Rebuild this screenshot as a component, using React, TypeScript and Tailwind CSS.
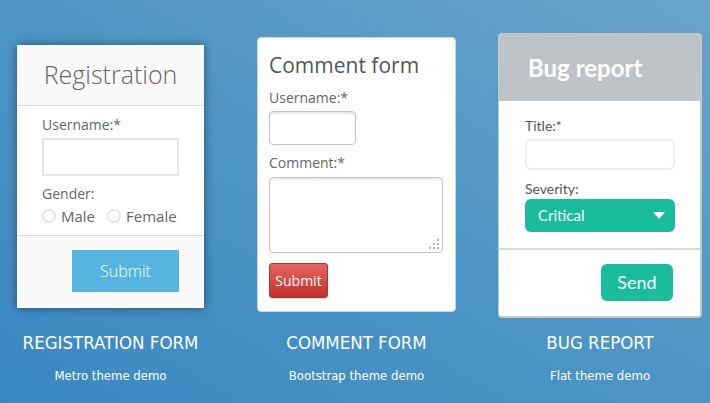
import React from "react";

const openSans = { fontFamily: '"Open Sans", "DejaVu Sans", sans-serif' };
const lato = { fontFamily: 'Lato, "Open Sans", sans-serif' };
const narrow = {
  fontFamily: '"Liberation Sans Narrow", "DejaVu Sans Condensed", "Liberation Sans", sans-serif',
  fontStretch: "condensed" as const,
};

function Caption({ title, sub }: { title: string; sub: string }) {
  return (
    <div className="flex flex-col items-center text-white whitespace-nowrap" style={narrow}>
      <div className="mt-[13px] text-[18.5px] leading-[24px]">{title}</div>
      <div className="mt-[12px] text-[13px] leading-[18px]">{sub}</div>
    </div>
  );
}

function Radio({ label }: { label: string }) {
  return (
    <div className="flex items-center gap-[5px]">
      <span className="w-[14px] h-[14px] rounded-full border-2 border-[#e3e3e3] bg-white" />
      <span>{label}</span>
    </div>
  );
}

function RegistrationCard() {
  return (
    <div
      className="mt-[12px] w-[187px] h-[263px] bg-white flex flex-col shadow-[0_0_9px_rgba(0,0,0,0.45)]"
      style={openSans}
    >
      <div className="h-[61px] bg-[#f9f9f9] border-b border-[#d6dddd] flex items-center justify-center">
        <span className="text-[25px] font-light text-[#666] leading-none pb-[1px]">Registration</span>
      </div>
      <div className="h-[130px] px-[25px] pt-[10px] text-[14px] text-[#666] border-b border-[#d6dddd]">
        <div className="leading-[18px]">Username:*</div>
        <div className="mt-[4px] h-[38px] w-[137px] border-2 border-[#e5e5e5] bg-white" />
        <div className="mt-[9px] leading-[18px]">Gender:</div>
        <div className="mt-[3px] flex items-center gap-[12px] text-[15px] leading-[20px]">
          <Radio label="Male" />
          <Radio label="Female" />
        </div>
      </div>
      <div className="flex-1 bg-[#f9f9f9] flex justify-end items-start pt-[14px] pr-[25px]">
        <div className="w-[107px] h-[42px] bg-[#55b5e0] text-white text-[16px] font-light flex items-center justify-center">
          Submit
        </div>
      </div>
    </div>
  );
}

function CommentCard() {
  return (
    <div
      className="mt-[4px] w-[199px] h-[275px] bg-white border border-[#c9d3dc] rounded-[4px] px-[11px] pt-[12px]"
      style={openSans}
    >
      <div className="text-[21px] text-[#555] leading-[30px]">Comment form</div>
      <div className="mt-[9px] text-[14px] text-[#666] leading-[18px]">Username:*</div>
      <div className="mt-[4px] w-[87px] h-[34px] rounded-[4px] border border-[#c4c4c4] shadow-[inset_0_2px_2px_rgba(0,0,0,0.09)]" />
      <div className="mt-[9px] text-[14px] text-[#666] leading-[18px]">Comment:*</div>
      <div className="mt-[5px] relative w-[174px] h-[76px] rounded-[4px] border border-[#c4c4c4] shadow-[inset_0_2px_2px_rgba(0,0,0,0.09)]">
        <svg className="absolute right-[3px] bottom-[3px]" width="10" height="10" viewBox="0 0 10 10">
          <g fill="#b5b5b5">
            <rect x="8" y="0" width="2" height="2" />
            <rect x="4" y="4" width="2" height="2" />
            <rect x="8" y="4" width="2" height="2" />
            <rect x="0" y="8" width="2" height="2" />
            <rect x="4" y="8" width="2" height="2" />
            <rect x="8" y="8" width="2" height="2" />
          </g>
        </svg>
      </div>
      <div className="mt-[10px] w-[59px] h-[35px] rounded-[3px] border border-[#a83a36] bg-[linear-gradient(#e86360,#c1312c)] text-white text-[14px] flex items-center justify-center shadow-[0_1px_1px_rgba(0,0,0,0.15)]">
        Submit
      </div>
    </div>
  );
}

function BugCard() {
  return (
    <div
      className="w-[204px] h-[285px] bg-white border border-[#c3c8cc] border-r-2 border-b-2 rounded-[4px] flex flex-col overflow-hidden"
      style={lato}
    >
      <div className="h-[67px] bg-[#bdc3c7] flex items-center pl-[29px]">
        <span className="text-[24px] font-bold text-white leading-none">Bug report</span>
      </div>
      <div className="h-[149px] px-[26px] pt-[16px] border-b-2 border-[#d7dbde]">
        <div className="text-[14px] text-[#555] leading-[18px]">Title:*</div>
        <div className="mt-[4px] h-[31px] w-[150px] rounded-[6px] border-2 border-[#eeeeee]" />
        <div className="mt-[10px] text-[14px] text-[#555] leading-[18px]">Severity:</div>
        <div className="mt-[1px] h-[33px] w-[150px] rounded-[6px] bg-[#1abc9c] flex items-center justify-between pl-[13px] pr-[10px]">
          <span className="text-[15px] text-white">Critical</span>
          <svg width="12" height="7" viewBox="0 0 12 7">
            <path d="M0 0 L12 0 L6 7 Z" fill="#fff" />
          </svg>
        </div>
      </div>
      <div className="flex-1 flex justify-end items-start pt-[14px] pr-[27px]">
        <div className="w-[72px] h-[37px] rounded-[6px] bg-[#1abc9c] text-white text-[18px] flex items-center justify-center">
          Send
        </div>
      </div>
    </div>
  );
}

export default function App() {
  return (
    <div className="w-[710px] h-[403px] overflow-hidden bg-[linear-gradient(to_top_right,#3a88c2,#4d95c6_50%,#6aa4c9)]">
      <div className="flex items-start pt-[33px] pl-[17px]">
        <div className="w-[187px] flex flex-col items-center">
          <div className="h-[285px]">
            <RegistrationCard />
          </div>
          <Caption title="REGISTRATION FORM" sub="Metro theme demo" />
        </div>
        <div className="ml-[53px] w-[199px] flex flex-col items-center">
          <div className="h-[285px]">
            <CommentCard />
          </div>
          <Caption title="COMMENT FORM" sub="Bootstrap theme demo" />
        </div>
        <div className="ml-[42px] w-[204px] flex flex-col items-center">
          <div className="h-[285px]">
            <BugCard />
          </div>
          <Caption title="BUG REPORT" sub="Flat theme demo" />
        </div>
      </div>
    </div>
  );
}
